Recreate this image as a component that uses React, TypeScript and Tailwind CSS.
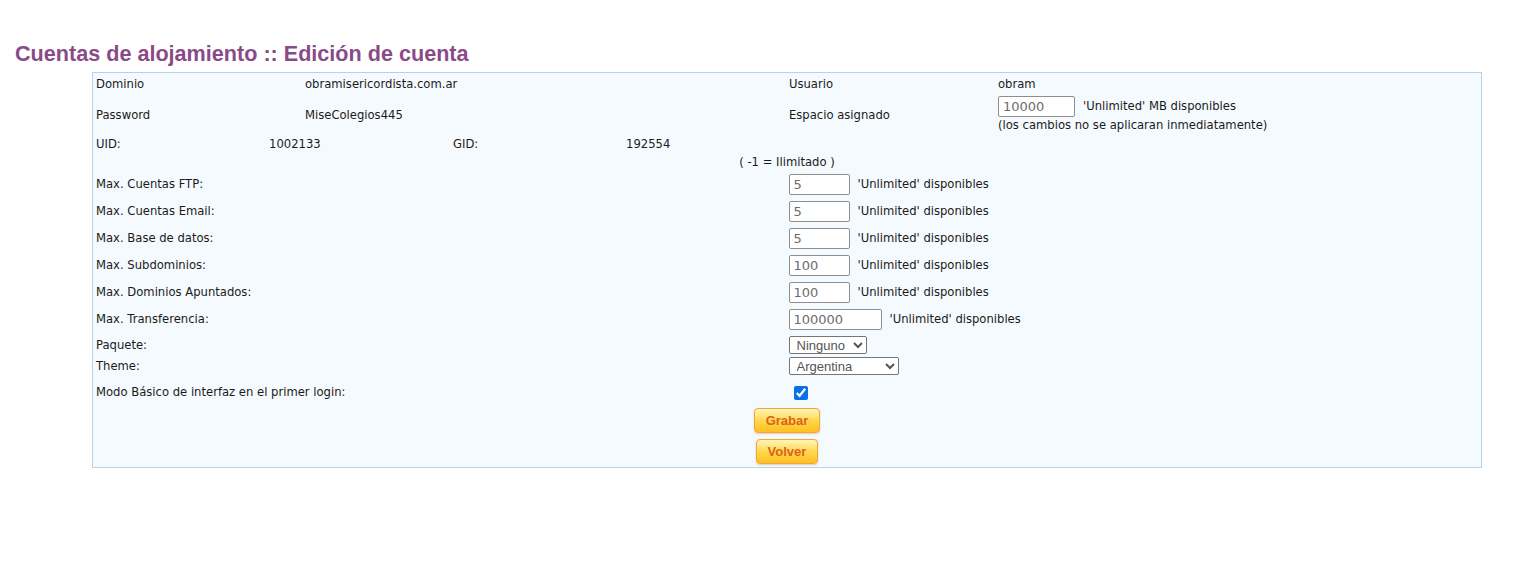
import React from "react";

const limits = [
  { label: "Max. Cuentas FTP:", value: "5", w: "w-[61px]" },
  { label: "Max. Cuentas Email:", value: "5", w: "w-[61px]" },
  { label: "Max. Base de datos:", value: "5", w: "w-[61px]" },
  { label: "Max. Subdominios:", value: "100", w: "w-[61px]" },
  { label: "Max. Dominios Apuntados:", value: "100", w: "w-[61px]" },
  { label: "Max. Transferencia:", value: "100000", w: "w-[93px]" },
];

function NumInput({ value, w }: { value: string; w: string }) {
  return (
    <input
      type="text"
      defaultValue={value}
      className={`${w} h-[21px] border border-[#8f8f8f] rounded-[2px] bg-white px-[4px] text-[13px] text-[#6d6d6d] font-['DejaVu_Sans',sans-serif] outline-none`}
    />
  );
}

function OrangeButton({ children }: { children: React.ReactNode }) {
  return (
    <button className="h-[25px] px-[11px] rounded-[4px] border border-[#f0a43a] bg-gradient-to-b from-[#fff6b8] via-[#ffd84a] to-[#ffbf1f] shadow-[0_1px_2px_rgba(200,120,0,0.35)] text-[13px] font-bold text-[#d9621c] font-['Liberation_Sans',Arial,sans-serif]">
      {children}
    </button>
  );
}

export default function App() {
  return (
    <div className="min-h-screen bg-white pt-[40px] font-['DejaVu_Sans',Verdana,sans-serif] text-[11.6px] text-[#1a1a1a]">
      <h1 className="pl-[15px] text-[21.6px] leading-[28px] font-bold text-[#8a4a88] font-['Liberation_Sans',Arial,sans-serif]">
        Cuentas de alojamiento :: Edición de cuenta
      </h1>

      <div className="ml-[92px] mt-[4px] w-[1390px] border border-[#b5d3ee] bg-[#f5faff] pb-[3px]">
        {/* datos fijos */}
        <div className="grid grid-cols-[209px_484px_209px_1fr] pl-[3px]">
          <div className="h-[23px] flex items-center">Dominio</div>
          <div className="h-[23px] flex items-center">obramisericordista.com.ar</div>
          <div className="h-[23px] flex items-center">Usuario</div>
          <div className="h-[23px] flex items-center">obram</div>

          <div className="h-[39px] flex items-center">Password</div>
          <div className="h-[39px] flex items-center">MiseColegios445</div>
          <div className="h-[39px] flex items-center">Espacio asignado</div>
          <div className="h-[39px] flex flex-col justify-start">
            <div className="flex items-center gap-[8px]">
              <NumInput value="10000" w="w-[77px]" />
              <span>'Unlimited' MB disponibles</span>
            </div>
            <div className="mt-[1px] leading-[14px]">(los cambios no se aplicaran inmediatamente)</div>
          </div>
        </div>

        <div className="grid grid-cols-[173px_184px_173px_1fr] pl-[3px] h-[20px] items-center">
          <div>UID:</div>
          <div>1002133</div>
          <div>GID:</div>
          <div>192554</div>
        </div>

        <div className="h-[16px] flex items-center justify-center">( -1 = Ilimitado )</div>

        <div>
          {limits.map((l) => (
            <div key={l.label} className="grid grid-cols-2 h-[27px] items-center pl-[3px]">
              <div>{l.label}</div>
              <div className="flex items-center gap-[8px]">
                <NumInput value={l.value} w={l.w} />
                <span>'Unlimited' disponibles</span>
              </div>
            </div>
          ))}
        </div>

        <div className="grid grid-cols-2 h-[21px] items-center pl-[3px] mt-[2px]">
          <div>Paquete:</div>
          <div>
            <select
              defaultValue="Ninguno"
              className="h-[18px] w-[78px] border border-[#767676] rounded-[2px] bg-white text-[13px] text-[#555] font-['Liberation_Sans',Arial,sans-serif] pl-[3px]"
            >
              <option>Ninguno</option>
            </select>
          </div>
        </div>

        <div className="grid grid-cols-2 h-[22px] items-center pl-[3px]">
          <div>Theme:</div>
          <div>
            <select
              defaultValue="Argentina"
              className="h-[18px] w-[110px] border border-[#767676] rounded-[2px] bg-white text-[13px] text-[#555] font-['Liberation_Sans',Arial,sans-serif] pl-[3px]"
            >
              <option>Argentina</option>
            </select>
          </div>
        </div>

        <div className="grid grid-cols-2 h-[30px] items-center pl-[3px]">
          <div>Modo Básico de interfaz en el primer login:</div>
          <div className="pl-[5px] flex items-center">
            <input type="checkbox" defaultChecked className="w-[14px] h-[14px] accent-[#0b6fe6]" />
          </div>
        </div>

        <div className="flex flex-col items-center gap-[6px]">
          <OrangeButton>Grabar</OrangeButton>
          <OrangeButton>Volver</OrangeButton>
        </div>
      </div>
    </div>
  );
}
